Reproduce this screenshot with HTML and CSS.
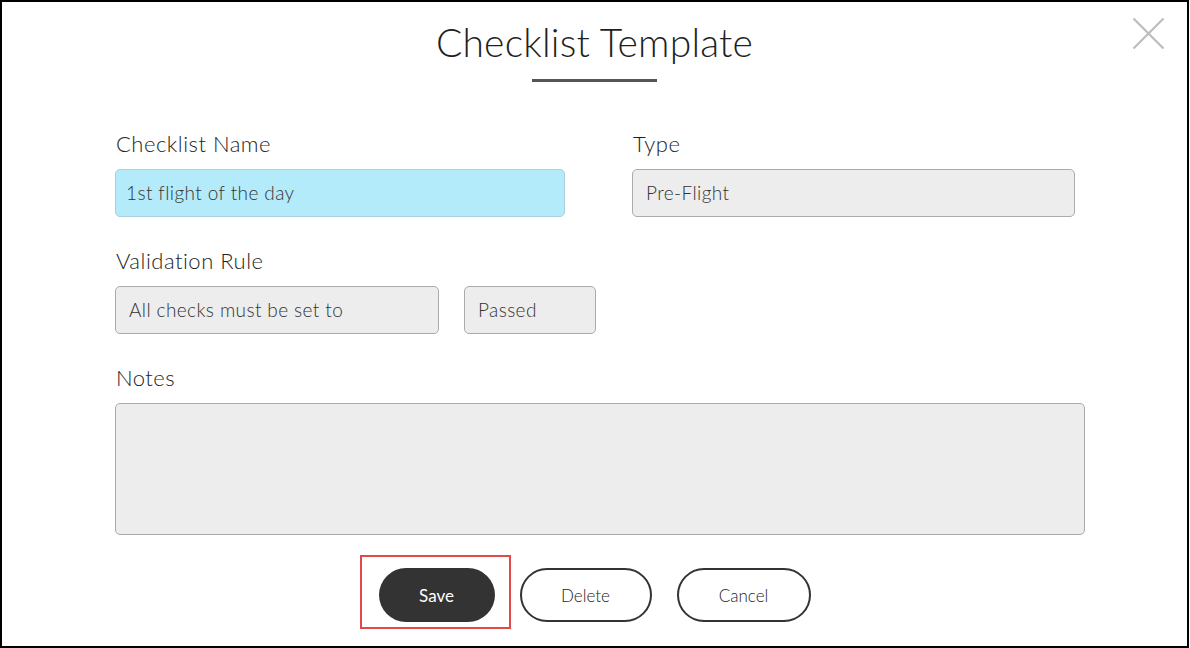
FILE: index.html
```html
<!DOCTYPE html>
<html>
<head>
<meta charset="utf-8">
<link rel="stylesheet" href="styles.css">
</head>
<body>
<div class="frame">
  <button class="close" aria-label="Close">
    <svg width="33" height="33" viewBox="0 0 33 33"><path d="M1.5 1.5 L31.5 31.5 M31.5 1.5 L1.5 31.5" stroke="#bdbdbd" stroke-width="2.2" fill="none"/></svg>
  </button>
  <header class="head">
    <h1 class="title">Checklist Template</h1>
    <div class="rule"></div>
  </header>
  <form class="form">
    <div class="row row-top">
      <div class="field">
        <label class="label">Checklist Name</label>
        <div class="input input-active">1st flight of the day</div>
      </div>
      <div class="field">
        <label class="label">Type</label>
        <div class="input">Pre-Flight</div>
      </div>
    </div>
    <div class="field">
      <label class="label">Validation Rule</label>
      <div class="rule-row">
        <div class="input input-rule">All checks must be set to</div>
        <div class="input input-passed">Passed</div>
      </div>
    </div>
    <div class="field">
      <label class="label">Notes</label>
      <div class="input notes"></div>
    </div>
  </form>
  <div class="actions">
    <button class="btn btn-save" type="button">Save</button>
    <button class="btn btn-outline btn-delete" type="button">Delete</button>
    <button class="btn btn-outline btn-cancel" type="button">Cancel</button>
  </div>
</div>
</body>
</html>
```
FILE: styles.css
```css
* { box-sizing: border-box; }
html, body { margin: 0; padding: 0; background: #fff; }
body { font-family: Lato, "Open Sans", sans-serif; color: #333; }

.frame {
  position: relative;
  width: 1189px;
  height: 648px;
  border: 2px solid #000;
  background: #fff;
}

.close {
  position: absolute;
  top: 15px;
  right: 22px;
  width: 33px;
  height: 33px;
  padding: 0;
  border: 0;
  background: none;
}
.close svg { display: block; }

.head {
  display: flex;
  flex-direction: column;
  align-items: center;
  padding-top: 16px;
}
.title {
  margin: 0;
  font-size: 39px;
  font-weight: 300;
  line-height: 48px;
  color: #1f1f1f;
  letter-spacing: 0.2px;
}
.rule {
  width: 125px;
  height: 3px;
  background: #555;
  margin-top: 13px;
}

.form {
  width: 970px;
  margin-left: 113px;
  margin-top: 50px;
  display: flex;
  flex-direction: column;
  gap: 32px;
}
.row-top {
  display: grid;
  grid-template-columns: 450px 443px;
  column-gap: 67px;
}
.field { display: flex; flex-direction: column; }
.label {
  font-size: 22px;
  font-weight: 300;
  line-height: 24px;
  letter-spacing: 0.5px;
  margin-bottom: 13px;
  color: #1e1e1e;
  padding-left: 1px;
}
.input {
  height: 48px;
  border: 1px solid #ababab;
  border-radius: 5px;
  background: #ededed;
  font-size: 19px;
  font-weight: 300;
  line-height: 46px;
  letter-spacing: 0.4px;
  padding-left: 13px;
  color: #333;
}
.input-active {
  background: #b4ebfb;
  border-color: #a9cfdc;
  padding-left: 10px;
}
.rule-row { display: flex; gap: 25px; }
.input-rule { width: 324px; }
.input-passed { width: 132px; }
.notes { height: 132px; width: 970px; }

.actions {
  display: flex;
  justify-content: center;
  gap: 25px;
  margin-top: 33px;
}
.btn {
  height: 54px;
  border-radius: 27px;
  font-family: Lato, "Open Sans", sans-serif;
  font-size: 17px;
  font-weight: 300;
  padding: 0;
  cursor: pointer;
}
.btn-save {
  position: relative;
  width: 116px;
  background: #333;
  color: #fff;
  border: 0;
  font-weight: 400;
}
.btn-save::after {
  content: "";
  position: absolute;
  top: -13px;
  left: -19px;
  right: -16px;
  bottom: -7px;
  border: 2px solid #e24a4a;
}
.btn-outline {
  background: #fff;
  border: 2px solid #333;
  color: #222;
}
.btn-delete { width: 132px; }
.btn-cancel { width: 134px; }
```
